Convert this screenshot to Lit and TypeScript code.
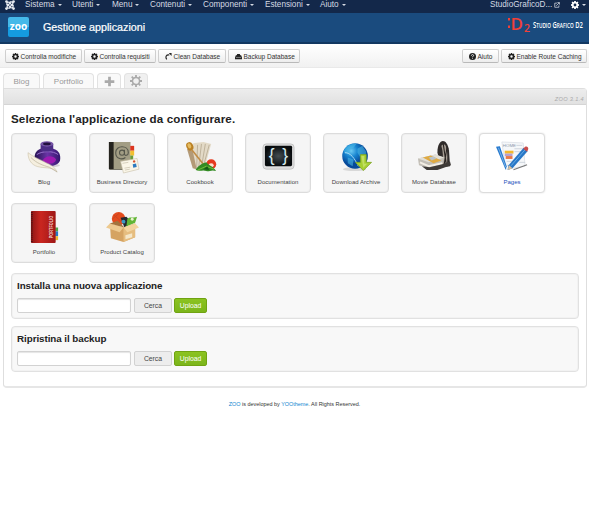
import { LitElement, html, css, svg } from "lit";
import { customElement, property } from "lit/decorators.js";

const gear = svg`<path fill="currentColor" fill-rule="evenodd" d="M6.500 0h3l.5 2 1.200.5L13 1.200 14.800 3l-1.300 1.800.5 1.200 2 .5v3l-2 .5-.5 1.200 1.300 1.800-1.800 1.800-1.800-1.300-1.200.5-.5 2h-3l-.5-2-1.200-.5L3 14.800 1.200 13l1.300-1.800L2 10l-2-.5v-3L2 6l.5-1.200L1.200 3 3 1.200l1.800 1.300L6 2zM8 5.200a2.800 2.800 0 1 0 0 5.600 2.800 2.800 0 0 0 0-5.600z"/>`;

const glyphs: Record<string, unknown> = {
  gear,
  wheel: svg`<g fill="none" stroke="currentColor"><circle cx="8" cy="8" r="4.700" stroke-width="1.900"/><path stroke-width="2.400" d="M8 0v3M8 13v3M0 8h3M13 8h3M2.300 2.300l2.200 2.200M11.500 11.500l2.200 2.200M2.300 13.700l2.200-2.200M11.500 4.500l2.200-2.200"/></g>`,
  plus: svg`<path fill="currentColor" d="M6 1h4v5h5v4h-5v5H6v-5H1V6h5z"/>`,
  redo: svg`<path d="M4 14.500C0 9 3 3 10 4.500" fill="none" stroke="currentColor" stroke-width="2.600"/><path fill="currentColor" d="M8.500 0H15v7z"/>`,
  drive: svg`<path fill="currentColor" d="M5 2h6l1 3h2l2 5v4H0v-4l2-5h2z"/><path stroke="#fff" d="M2 10h12"/>`,
  help: svg`<circle cx="8" cy="8" r="8" fill="currentColor"/><path d="M5.500 6c0-4 5.500-3 5 0-.2 1.500-2.500 1.500-2.500 3.500M8 11v2" fill="none" stroke="#fff" stroke-width="1.900"/>`,
  external: svg`<path d="M8 3H2v11h11V9" fill="none" stroke="currentColor" stroke-width="2"/><path d="M6 10l8-8M9 1.500h5.500V7" fill="none" stroke="currentColor" stroke-width="2"/>`,
  joomla: svg`<g fill="none" stroke="currentColor" stroke-width="2"><path d="M3 8.500V6c0-2.500 2.500-3.500 4.200-1.800L12 9M7.500 3H10c2.500 0 3.500 2.500 1.800 4.200L7 12M13 7.500V10c0 2.500-2.500 3.500-4.200 1.800L4 7M8.500 13H6c-2.500 0-3.500-2.500-1.800-4.200L9 4"/></g><g fill="currentColor"><circle cx="2.400" cy="2.400" r="2.200"/><circle cx="13.600" cy="2.400" r="2.200"/><circle cx="2.400" cy="13.600" r="2.200"/><circle cx="13.600" cy="13.600" r="2.200"/></g>`,
};

const glyph = (name: string) => html`<svg class="glyph ${name}" viewBox="0 0 16 16">${glyphs[name]}</svg>`;

const pictures: Record<string, unknown> = {
  blog: svg`<defs><linearGradient id="ink"><stop stop-color="#251252"/><stop offset=".5" stop-color="#6a35a6"/><stop offset="1" stop-color="#35156f"/></linearGradient></defs>
    <ellipse cx="22" cy="25" rx="11" ry="2" fill="#bdb6c2" opacity=".6"/>
    <path d="M13 8c-5 2-7 6-6 12 3 8 24 8 26 0 1-6-1-10-7-12z" fill="url(#ink)"/>
    <path d="M15 20c4-6 11-5 14-1-1 5-9 6-14 1z" fill="#9e1bb0"/><path d="M9 14c6-4 17-4 22 0" stroke="#9973cb" fill="none"/>
    <path d="M13 3v6c2 2.500 11 2.500 13 0V3z" fill="#4b2c85"/><ellipse cx="19.500" cy="3" rx="6.700" ry="2.800" fill="#7454a5"/><ellipse cx="19.500" cy="3" rx="4" ry="1.400" fill="#21103e"/>
    <path d="M0 12c0 9 5 14 13 15 6 1 13 0 17 5-3-7-9-8-14-11C10 18 5 16 0 12z" fill="#f5efdf" stroke="#c9bfa5" stroke-width=".6"/><path d="M3 17c6 6 12 8 19 10l8 5" fill="none" stroke="#b0a68f" stroke-width=".6"/>`,
  directory: svg`<path d="M3 1h22v28H3z" fill="#88836c"/><path d="M3 1h5v28H3z" fill="#25241f"/><path d="M8 1h17v28H8z" fill="#a29d84"/>
    <path d="M25 5h4v5h-4z" fill="#dc351f"/><path d="M25 10h4v5h-4z" fill="#f2bf30"/><path d="M25 15h3v5h-3z" fill="#6a9b38"/><path d="M3 29h22l-2 1H4z" fill="#5a5748"/>
    <g fill="none" stroke="#55564a" stroke-width="1.100"><circle cx="16.500" cy="12" r="2.600"/><path d="M19 9v4c0 3 4 2 4-1 0-8-13-8-13 0 0 6 6 8 10 5"/></g>
    <path d="M15 21l17-3 2 11-16 4z" fill="#faf6e8" stroke="#c6bda7" stroke-width=".6"/><path d="M27.500 24l3.500-.7.600 3.500-3.500.7z" fill="#2b7abf"/><path d="M17 23l6-1M19 28l6-1M19.500 30l5-1" stroke="#c4bca8" stroke-width=".7"/><circle cx="29" cy="21" r="1.200" fill="#d8502d"/>`,
  cookbook: svg`<path d="M4 4l7 25 10-1 7-25-8-2-9 1z" fill="#e3dac7"/><path d="M14 4l-1 24M18 3l-3 25M22 3l-4 24M26 4l-6 22" stroke="#b9ac94" stroke-width=".9"/><path d="M3 8l6 20 4 1L9 10z" fill="#b39a77"/>
    <ellipse cx="6" cy="5.500" rx="3.500" ry="4.500" transform="rotate(-25 6 5.500)" fill="#bb8124"/><ellipse cx="5.500" cy="5" rx="1.800" ry="2.800" transform="rotate(-25 5.500 5)" fill="#e5bb60"/><path d="M8 9l12 15" stroke="#c08b45" stroke-width="1.600"/>
    <circle cx="28" cy="24" r="5.200" fill="#e5391f"/><ellipse cx="28" cy="25" rx="2.600" ry="2" fill="#fae0d0"/><path d="M12 30c2-4 7-7 11-8 2 3 7 4 10 9-5-2-7 1-10 0-4-2-6 1-11-1z" fill="#328b23"/><path d="M14 30l9-4 8 3" stroke="#74be3b" fill="none"/><path d="M20 29l4-3 2 4z" fill="#165a16"/>`,
  docs: svg`<defs><radialGradient id="slate"><stop stop-color="#434c50"/><stop offset="1" stop-color="#080b0d"/></radialGradient></defs><rect x="1" y="3" width="32" height="26" rx="3.500" fill="#dedede" stroke="#c4c4c4"/><rect x="3" y="5" width="28" height="21" rx="1.500" fill="url(#slate)"/>
    <g font-family="Liberation Sans" font-size="18" fill="#d5ecee"><text x="7" y="21">{</text><text x="21" y="21">}</text></g>`,
  download: svg`<defs><radialGradient id="globe" cx=".35" cy=".3"><stop stop-color="#6bcaf3"/><stop offset=".5" stop-color="#1683cf"/><stop offset="1" stop-color="#074a9a"/></radialGradient></defs><ellipse cx="15" cy="29" rx="12" ry="2" fill="#bbb" opacity=".5"/><circle cx="15.500" cy="15.500" r="13.200" fill="url(#globe)"/>
    <path d="M4 10C7 4 13 2 17 3l-3 4-5 1 1 4-5 1zM18 8l5-3 4 6-1 6-5 0-3-5zM8 17l6 2-1 7-5-3z" fill="#4cbbe7" opacity=".55"/><path d="M5 12c6 0 10 6 14 14" fill="none" stroke="#a9dbf5"/>
    <path d="M21 14h6v8h5.500L24 30.500 16 22h5z" fill="#a6cf32" stroke="#7ba31f" stroke-width=".8"/><path d="M22 15.500h3v8h3l-4 4z" fill="#d4e984" opacity=".6"/>`,
  movie: svg`<path d="M20 12c0-15 10-16 12-2l1 16-9 1z" fill="#302c2b"/><path d="M24 5c5-6 7 5 6 19l-5 1c1-8 1-14-1-20z" fill="#a59c92"/><path d="M26 3l3 20M30 6l-3 18" stroke="#282321" stroke-width="1.100"/>
    <path d="M0 18l18-4 9 3-2 10-14 1L1 25z" fill="#c2beb6"/><path d="M0 18l18-4 9 3-16 5z" fill="#e2dfd7"/><path d="M5 17l8-2 11 5-8 3z" fill="#dfaa42"/><path d="M11 17l5-1 3 2-5 2z" fill="#b9c2c9"/><path d="M2 22l9 4 14-3" stroke="#f3eee4" stroke-width="2" fill="none"/><path d="M4 26l8 1 13-3 8-3 1 4-14 5H9z" fill="#3f3b38"/>`,
  pages: svg`<path d="M6 1l22 1 2 24-20 3z" fill="#f5f7f9" stroke="#d5dae2" stroke-width=".7"/><text x="7" y="6.500" font-family="Liberation Sans" font-size="4.500" fill="#8d97a8">HOME</text><path d="M21 4.500h6M19 8h9M19 11h8M11 21h7M24 22h6M11 25h6" stroke="#c4cbd6" stroke-width=".8"/>
    <path d="M9 10h9v3H9z" fill="#f3b82c"/><path d="M9 13h8v2.500H9z" fill="#b59fd0"/><path d="M10 15.500h7v3h-7z" fill="#e87848"/><path d="M0 6l4-.5L11 26l-1 4z" fill="#2579cf"/><path d="M2.500 7l7.500 20" stroke="#b3d5f1" stroke-width=".6"/>
    <path d="M13 25L28.500 7l4 3.500L17 28l-5 2z" fill="#2877c6"/><path d="M15.500 25.500L30 9" stroke="#78b9ec" stroke-width=".8"/><path d="M28 8l2-2c2-1 4 1 3 3l-1 2z" fill="#c84c4b"/><path d="M12 30l1.500-5 3.500 3z" fill="#dcc09a"/><path d="M18 29.500l14-5" stroke="#777" stroke-width="1.100"/>`,
  portfolio: svg`<defs><linearGradient id="red"><stop stop-color="#8c1514"/><stop offset=".4" stop-color="#ca2620"/><stop offset="1" stop-color="#9d1716"/></linearGradient></defs><path d="M28 17h3v4h-3z" fill="#4ea44d"/><path d="M28 21h3v5h-3z" fill="#287ac3"/><path d="M28 26h3v4h-3z" fill="#edba31"/><rect x="3" y="0" width="25.500" height="33" rx="1" fill="url(#red)"/><path d="M4 1v32" stroke="#4e1313" stroke-width="1.800" stroke-dasharray="1 1"/>
    <text transform="translate(25.500 28) rotate(-90)" font-family="Liberation Sans" font-weight="700" font-size="5.500" textLength="23" lengthAdjust="spacingAndGlyphs" fill="#f1cfc7">PORTFOLIO</text>`,
  catalog: svg`<circle cx="13" cy="8" r="7" fill="#e34b1d"/><path d="M8 4l9 8M7 8l7-6" stroke="#c94420"/><path d="M15 7l6-1 6 6-8 5z" fill="#24292f"/><circle cx="18" cy="11" r="2" fill="#3d98c7"/><path d="M22 8c3-3 6 0 10-2l-2 6-9 4z" fill="#62b536"/><circle cx="27" cy="8.500" r="1.500" fill="#e9f2ce"/>
    <path d="M4 13l14 4 12-4v14l-12 5L5 28z" fill="#d5a362"/><path d="M18 17l12-4v14l-12 5z" fill="#e6bd7f"/><path d="M4 13l14 4-4 5L0 17z" fill="#edc98f"/><path d="M30 13l4 4-12 5-4-5z" fill="#f3d49e"/><path d="M4 13l8-3 7 7z" fill="#a3733c"/><path d="M20 25l7-2v4l-7 2z" fill="#f5e7c9"/>`,
};

@customElement("zoo-button")
class ZooButton extends LitElement {
  @property() icon = "";
  @property() label = "";
  static styles = css`
    :host { display: flex; align-items: center; box-sizing: border-box; height: 14px; border: 1px solid #cfcfcf; border-bottom-color: #b9b9b9; border-radius: 2px; background: linear-gradient(#fff, #ededed); padding-left: 5.500px; color: #333; font-size: 6.500px; white-space: nowrap; }
    .glyph { width: 7px; height: 7px; margin-right: 2px; color: #222; flex: none; }
  `;
  render() { return html`${glyph(this.icon)}<span>${this.label}</span>`; }
}

@customElement("app-card")
class AppCard extends LitElement {
  @property() picture = "";
  @property() label = "";
  @property({ type: Boolean, reflect: true }) active = false;
  static styles = css`
    :host { display: flex; flex-direction: column; align-items: center; box-sizing: border-box; height: 60px; border: 1px solid #dcdcdc; border-radius: 4px; background: #f5f5f5; padding-top: 7px; box-shadow: inset 0 0 0 1px #efefef; color: #444; font-size: 6px; letter-spacing: .04px; white-space: nowrap; }
    :host([active]) { background: #fff; color: #1d50bb; box-shadow: 0 0 2px #ddd; }
    svg { width: 33px; height: 33px; overflow: visible; }
    span { line-height: 8px; margin-top: 4px; }
  `;
  render() { return html`<svg viewBox="0 0 34 34">${pictures[this.picture]}</svg><span>${this.label}</span>`; }
}

@customElement("upload-box")
class UploadBox extends LitElement {
  @property() heading = "";
  static styles = css`
    :host { display: block; box-sizing: border-box; height: 46px; border: 1px solid #e1e1e1; border-radius: 4px; background: #f8f8f8; padding: 6px 5px; box-shadow: inset 0 0 0 1px #f2f2f2; }
    h2 { margin: 0; height: 18px; font-size: 9.800px; letter-spacing: -.05px; line-height: 11px; color: #222; white-space: nowrap; }
    .row { display: flex; gap: 3px; }
    .field, .browse, .upload { box-sizing: border-box; height: 15px; border: 1px solid #d2d2d2; border-radius: 2px; line-height: 13px; text-align: center; font-size: 6.800px; }
    .field { width: 114px; background: #fff; box-shadow: inset 0 1px 1px #e5e5e5; }
    .browse { width: 38px; background: #ededed; color: #444; }
    .upload { width: 33px; margin-left: -1px; border-color: #70a312; background: linear-gradient(#8bc321, #7bb51a); color: #fff; }
  `;
  render() { return html`<h2>${this.heading}</h2><div class="row"><div class="field"></div><div class="browse">Cerca</div><div class="upload">Upload</div></div>`; }
}

const menu: [string, number][] = [["Sistema", 47], ["Utenti", 40], ["Menu", 38], ["Contenuti", 53], ["Componenti", 62], ["Estensioni", 55], ["Aiuto", 30]];
const actions: [string, string, number][] = [["gear", "Controlla modifiche", 77], ["gear", "Controlla requisiti", 72], ["redo", "Clean Database", 68], ["drive", "Backup Database", 72]];
const apps: [string, string][] = [["blog", "Blog"], ["directory", "Business Directory"], ["cookbook", "Cookbook"], ["docs", "Documentation"], ["download", "Download Archive"], ["movie", "Movie Database"], ["pages", "Pages"], ["portfolio", "Portfolio"], ["catalog", "Product Catalog"]];

@customElement("app-root")
class AppRoot extends LitElement {
  static styles = css`
    :host { display: block; height: 529px; overflow: hidden; background: #fff; font-family: "Liberation Sans", sans-serif; }
    * { box-sizing: border-box; }
    nav { display: flex; height: 13px; padding-left: 5px; background: #13284a; color: #d5dae3; font-size: 8.200px; line-height: 10px; white-space: nowrap; }
    .joomla { width: 10px; height: 10px; margin-right: 10px; flex: none; color: #e8ebf0; }
    .menu { display: flex; gap: 3px; }
    .caret { width: 0; height: 0; margin-top: 4px; border: 2.200px solid transparent; border-top-color: currentColor; border-bottom: 0; }
    .site { display: flex; margin-left: auto; width: 99px; }
    .site .external { width: 6px; height: 6px; margin: 2px 11px 0 2px; }
    .site .gear { width: 8px; height: 8px; margin: 1px 3px 0 0; color: #fff; }
    header { display: flex; align-items: center; height: 31px; padding: 0 6px 2px 8px; background: #1a4b7e; border-bottom: 2px solid #123861; color: #fff; }
    .zoo { width: 21px; height: 20px; border-radius: 2px; background: linear-gradient(#45b9e9 50%, #159be0 50%); }
    h1 { margin: 0 0 0 14px; font-size: 10.750px; line-height: 14px; font-weight: 400; white-space: nowrap; -webkit-text-stroke: .2px #fff; }
    .brand { display: flex; align-items: flex-start; gap: 2px; width: 76px; height: 19px; margin: -5px 0 0 auto; }
    .mark { width: 24px; height: 19px; overflow: visible; }
    .name { width: 50px; height: 19px; overflow: visible; }
    .toolbar { display: flex; gap: 2px; height: 24px; padding: 5px 2px 0 5px; background: linear-gradient(#fff, #f1f1f1); border-bottom: 1px solid #e9e9e9; }
    .push { margin-left: auto; }
    .tabs { display: flex; gap: 3px; height: 20px; padding: 5px 3px 0; }
    .tab { display: flex; align-items: center; justify-content: center; height: 15px; border: 1px solid #e2e2e2; border-bottom: 0; border-radius: 4px 4px 0 0; background: #f9f9f9; color: #999; font-size: 8px; }
    .tab .glyph { width: 11px; height: 11px; color: #aaa; }
    .tab.on { background: #f0f0f0; }
    .tab.on .glyph { width: 12px; height: 12px; }
    .panel { margin: 0 2px 0 3px; height: 300px; border: 1px solid #dedede; border-bottom: 2px solid #e6e6e6; border-radius: 0 4px 4px 4px; background: #fff; }
    .bar { height: 16px; padding: 6px 2px 0; background: linear-gradient(#ededed, #e1e1e1); border-bottom: 1px solid #d5d5d5; text-align: right; font-size: 5.600px; font-style: italic; line-height: 8px; letter-spacing: .35px; color: #aaa; }
    .body { padding: 0 7px; }
    h2 { margin: 0; padding-top: 7px; height: 28px; font-size: 11.600px; letter-spacing: .125px; line-height: 14px; color: #222; white-space: nowrap; }
    .grid { display: grid; grid-template-columns: repeat(7, 66px); gap: 10px 12px; margin-bottom: 10px; }
    upload-box + upload-box { margin-top: 7px; }
    footer { margin-top: 12px; text-align: center; font-size: 5.450px; line-height: 8px; color: #333; }
    .link { color: #0f86d0; }
  `;
  render() {
    return html`
      <nav>${glyph("joomla")}
        ${menu.map(([t, w]) => html`<div class="menu" style="width:${w}px"><span>${t}</span><i class="caret"></i></div>`)}
        <div class="site"><span>StudioGraficoD...</span>${glyph("external")}${glyph("gear")}<i class="caret"></i></div>
      </nav>
      <header>
        <svg class="zoo" viewBox="0 0 21 20"><text x="1.800" y="13.200" font-family="Open Sans" font-size="10" font-weight="700" textLength="17.400" lengthAdjust="spacingAndGlyphs" fill="#fff">zoo</text></svg>
        <h1>Gestione applicazioni</h1>
        <div class="brand">
          <svg class="mark" viewBox="0 0 24 19" font-family="Open Sans" font-weight="600" fill="#f04038"><rect x="1" y="3" width="2" height="2.500"/><rect x="1" y="10.500" width="2" height="2.500"/><text x="3.500" y="14.500" font-size="17">D</text><text x="17" y="17" font-size="10.500">2</text></svg>
          <svg class="name" viewBox="0 0 50 19" font-family="Open Sans"><text transform="translate(0 13) scale(.63 1)" fill="#fff" font-size="9.600" font-weight="600" textLength="79" lengthAdjust="spacingAndGlyphs">S<tspan font-size="7.800">TUDIO</tspan> G<tspan font-size="7.800">RAFICO</tspan> D2</text></svg>
        </div>
      </header>
      <div class="toolbar">
        ${actions.map(([i, t, w]) => html`<zoo-button icon=${i} label=${t} style="width:${w}px"></zoo-button>`)}
        <zoo-button class="push" icon="help" label="Aiuto" style="width:37px"></zoo-button><zoo-button icon="gear" label="Enable Route Caching" style="width:86px"></zoo-button>
      </div>
      <div class="tabs"><div class="tab" style="width:37px">Blog</div><div class="tab" style="width:51px">Portfolio</div><div class="tab" style="width:24px">${glyph("plus")}</div><div class="tab on" style="width:24px">${glyph("wheel")}</div></div>
      <div class="panel"><div class="bar">ZOO 3.1.4</div>
        <div class="body"><h2>Seleziona l'applicazione da configurare.</h2>
          <div class="grid">${apps.map(([p, l]) => html`<app-card picture=${p} label=${l} ?active=${p === "pages"}></app-card>`)}</div>
          <upload-box heading="Installa una nuova applicazione"></upload-box><upload-box heading="Ripristina il backup"></upload-box>
        </div></div>
      <footer><span class="link">ZOO</span> is developed by <span class="link">YOOtheme</span>. All Rights Reserved.</footer>`;
  }
}
